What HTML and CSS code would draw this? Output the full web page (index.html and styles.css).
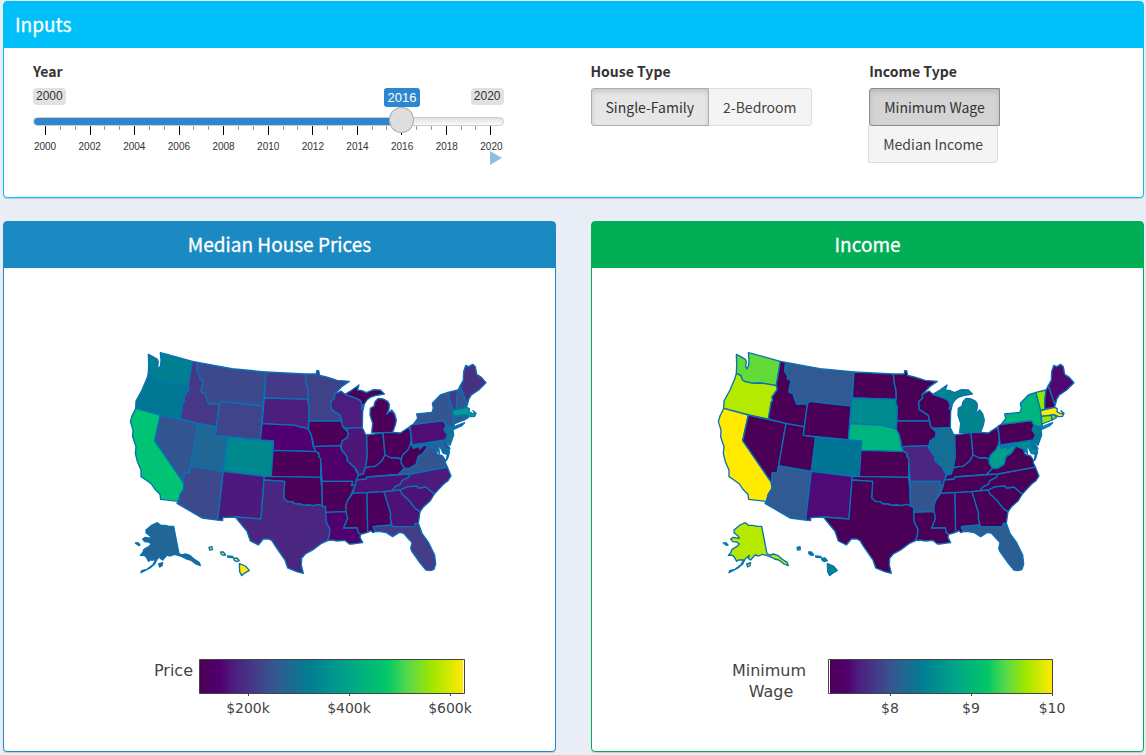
FILE: index.html
```html
<!DOCTYPE html>
<html lang="en">
<head>
<meta charset="utf-8">
<title>Housing and Income</title>
<link rel="stylesheet" href="styles.css">
</head>
<body>
<main class="page">
  <section class="box box-aqua">
    <header class="box-header"><h2 class="box-title">Inputs</h2></header>
    <div class="inputs">
      <div class="field">
        <label class="field-label" for="year">Year</label>
        <div class="slider">
          <div class="slider-tags">
            <span class="tag">2000</span>
            <span class="tag">2020</span>
            <output class="bubble" for="year">2016</output>
          </div>
          <input class="range" id="year" type="range" min="2000" max="2020" value="2016">
          <div class="ticks"><i class="major"></i><i></i><i></i><i class="major"></i><i></i><i></i><i class="major"></i><i></i><i></i><i class="major"></i><i></i><i></i><i class="major"></i><i></i><i></i><i class="major"></i><i></i><i></i><i class="major"></i><i></i><i></i><i class="major"></i><i></i><i></i><i class="major"></i><i></i><i></i><i class="major"></i><i></i><i></i><i class="major"></i></div>
          <div class="years"><span>2000</span><span>2002</span><span>2004</span><span>2006</span><span>2008</span><span>2010</span><span>2012</span><span>2014</span><span>2016</span><span>2018</span><span>2020</span></div>
          <button class="play" type="button" aria-label="Play"><svg width="12" height="14" viewBox="0 0 12 14"><path d="M0 0L12 7L0 14Z" fill="#8bc1de"/></svg></button>
        </div>
      </div>
      <div class="field" role="group" aria-labelledby="house-label">
        <span class="field-label" id="house-label">House Type</span>
        <div class="buttons">
          <button class="btn active" type="button">Single-Family</button>
          <button class="btn" type="button">2-Bedroom</button>
        </div>
      </div>
      <div class="field" role="group" aria-labelledby="income-label">
        <span class="field-label" id="income-label">Income Type</span>
        <div class="buttons">
          <button class="btn active focused" type="button">Minimum Wage</button>
          <button class="btn" type="button">Median Income</button>
        </div>
      </div>
    </div>
  </section>

  <div class="panels">
    <section class="box box-blue">
      <header class="box-header centered"><h2 class="box-title">Median House Prices</h2></header>
      <div class="plot">
        <svg class="map" viewBox="0 0 1110 750" role="img" aria-label="Median house prices by state">
          <defs>
            <path id="wa" d="M79 43L92 50L106 58L109 66L107 80L111 87L116 75L117 60L115 38L160 50L211 64L199 137L165 131L150 129L130 130L105 125L97 120L92 106L79 100L80 75Z"/>
            <path id="or" d="M79 100L92 106L97 120L105 125L130 130L150 129L165 131L199 137L202 148L186 171L188 182L184 185L175 237L115 225L41 205L42 183L60 150L75 115Z"/>
            <path id="ca" d="M41 205L115 225L98 302L184 427L186 445L175 462L169 484L116 478L114 463L98 447L89 433L72 420L57 410L57 390L46 365L40 340L42 320L32 290L33 270L25 245L30 228L38 212Z"/>
            <path id="nv" d="M115 225L228 250L206 378L201 400L187 398L184 427L98 302Z"/>
            <path id="ut" d="M228 250L283 260L280 286L317 291L304 394L206 378Z"/>
            <path id="id" d="M211 64L227 67L224 93L234 110L232 115L244 122L238 145L238 157L249 160L255 180L261 193L279 191L292 193L283 260L228 250L175 237L184 185L188 182L186 171L202 148L199 137Z"/>
            <path id="mt" d="M227 67L330 86L432 96L423 198L297 184L292 193L279 191L261 193L255 180L249 160L238 157L238 145L244 122L232 115L234 110L224 93Z"/>
            <path id="wy" d="M297 184L423 198L415 300L280 286L292 193Z"/>
            <path id="co" d="M317 291L455 303L448 409L304 395Z"/>
            <path id="az" d="M206 378L304 394L287 540L240 534L165 490L169 484L175 462L186 445L184 427L187 398L201 400Z"/>
            <path id="nm" d="M304 394L427 409L417 537L340 531L302 533L302 542L287 540Z"/>
            <path id="nd" d="M432 96L550 102L553 130L558 150L559 178L427 174Z"/>
            <path id="sd" d="M427 174L559 178L557 187L562 200L561 243L559 268L545 262L534 261L519 256L420 251Z"/>
            <path id="ne" d="M420 251L519 256L534 261L545 262L559 268L567 282L573 315L582 335L453 331L455 303L415 300Z"/>
            <path id="ks" d="M453 331L582 335L592 341L590 347L596 357L596 412L448 409Z"/>
            <path id="ok" d="M427 409L596 412L600 450L601 498L589 493L575 497L559 495L545 496L534 492L520 492L510 485L498 485L485 475L488 424L426 420Z"/>
            <path id="tx" d="M426 420L488 424L485 475L498 485L510 485L520 492L534 492L545 496L559 495L575 497L589 493L601 498L611 501L613 546L624 568L622 588L616 602L599 610L575 628L550 642L539 655L538 675L544 700L524 695L497 684L489 660L475 640L459 617L450 602L440 597L424 597L409 615L385 603L375 574L340 531L417 537Z"/>
            <path id="mn" d="M550 102L583 102L584 92L590 92L593 106L610 110L630 116L645 121L682 124L659 140L637 163L638 175L626 185L628 208L655 226L659 243L561 243L562 200L557 187L559 178L558 150L553 130Z"/>
            <path id="ia" d="M561 243L659 243L662 260L679 277L676 293L660 303L657 320L654 317L574 320L573 305L567 282L559 268Z"/>
            <path id="mo" d="M574 320L654 317L659 330L675 349L676 362L696 380L709 405L703 422L700 435L688 437L692 424L600 424L596 357L590 347L592 341L582 335Z"/>
            <path id="ar" d="M600 424L692 424L688 437L700 435L689 460L678 480L672 495L673 515L611 517L611 501L601 498Z"/>
            <path id="la" d="M611 517L673 515L677 535L665 564L706 563L709 578L716 583L714 592L722 608L704 610L690 612L682 612L668 601L645 603L630 600L616 602L622 588L624 568L613 546Z"/>
            <path id="wi" d="M637 163L657 153L669 163L704 175L716 182L720 196L717 208L727 192L722 215L721 263L672 265L662 260L659 243L655 226L628 208L626 185L638 175Z"/>
            <path id="mi" d="M669 163L690 150L711 135L706 150L720 152L733 158L755 149L775 150L787 162L760 167L745 172L735 180L727 192L720 196L716 182L704 175ZM769 175L784 177L797 184L802 193L801 208L794 223L809 210L818 222L823 240L820 255L812 277L749 278L752 250L744 225L745 205L756 198L759 185Z"/>
            <path id="il" d="M672 265L721 263L730 282L734 285L736 350L730 382L724 402L710 405L705 392L696 380L676 362L675 349L659 330L657 320L660 303L676 293L679 277Z"/>
            <path id="in" d="M734 285L783 278L789 345L780 362L765 375L757 380L745 380L730 384L736 350Z"/>
            <path id="oh" d="M783 278L812 277L835 279L862 261L868 290L866 312L858 330L842 345L838 357L825 354L808 354L789 345Z"/>
            <path id="ky" d="M730 384L745 380L757 380L765 375L780 362L789 345L808 354L825 354L838 357L838 370L848 385L830 403L735 411L733 417L703 420L710 405L724 402Z"/>
            <path id="tn" d="M703 420L733 417L735 411L863 402L860 412L840 422L835 433L820 440L810 452L786 455L692 460L700 435Z"/>
            <path id="ms" d="M692 460L735 458L737 577L716 583L709 578L706 563L665 564L677 535L672 515L672 495L678 480Z"/>
            <path id="al" d="M735 458L786 455L806 520L805 535L809 555L754 560L760 575L752 578L747 572L737 577Z"/>
            <path id="ga" d="M786 455L834 450L840 462L860 480L880 505L894 515L889 550L880 550L877 560L811 560L805 535L806 520Z"/>
            <path id="sc" d="M834 450L855 440L885 438L890 444L912 441L937 462L925 482L905 500L894 515L880 505L860 480L840 462Z"/>
            <path id="nc" d="M810 452L820 440L835 433L840 422L860 412L863 402L976 381L987 408L978 422L965 432L950 448L937 462L912 441L890 444L885 438L855 440L834 450Z"/>
            <path id="fl" d="M754 560L809 555L811 560L877 560L880 550L889 550L900 580L920 608L938 645L941 672L936 688L925 692L912 690L895 670L870 635L866 625L870 608L858 595L845 580L832 577L812 590L793 578L770 574L760 575Z"/>
            <path id="va" d="M830 403L848 385L862 385L882 373L888 350L903 340L918 318L940 327L945 342L962 348L970 360L970 368L976 381L863 402ZM976 343L983 335L978 352L973 362Z"/>
            <path id="wv" d="M838 357L842 345L858 330L866 312L870 315L874 324L892 318L893 327L906 315L918 318L903 340L888 350L882 373L862 385L848 385L838 370Z"/>
            <path id="md" d="M870 315L963 302L968 328L983 328L976 343L964 340L955 322L950 318L952 340L940 327L918 318L906 315L893 327L892 318L874 324Z"/>
            <path id="de" d="M963 302L970 300L974 312L984 325L968 328Z"/>
            <path id="nj" d="M972 255L992 262L995 285L984 316L970 305L969 300L977 285L966 270Z"/>
            <path id="pa" d="M864 258L874 253L964 242L972 255L966 270L977 285L969 300L870 315L868 290Z"/>
            <path id="ny" d="M874 253L887 235L884 222L930 217L934 205L931 190L955 165L978 157L985 185L994 212L994 240L997 253L992 262L972 255L964 242ZM993 269L997 260L1028 248L1018 258Z"/>
            <path id="vt" d="M978 157L1008 150L1004 185L1004 207L992 212L985 185Z"/>
            <path id="nh" d="M1008 150L1015 137L1034 193L1034 202L1004 207L1004 185Z"/>
            <path id="me" d="M1015 137L1024 120L1025 95L1031 76L1040 80L1052 73L1060 80L1064 103L1078 112L1092 128L1070 150L1048 165L1040 178L1036 195L1030 180Z"/>
            <path id="ma" d="M992 212L1034 202L1042 206L1041 215L1051 221L1060 222L1053 212L1062 220L1058 229L1046 230L1032 224L994 229Z"/>
            <path id="ct" d="M994 229L1024 226L1027 240L996 252Z"/>
            <path id="ri" d="M1024 226L1032 224L1040 232L1027 240Z"/>
            <path id="ak" d="M106 548L116 556L129 556L141 559L155 559L171 641L180 645L190 642L203 646L216 657L232 668L235 677L222 672L206 660L194 657L180 650L171 647L158 643L145 648L135 645L122 660L115 655L118 646L105 658L98 672L84 684L57 698L59 692L75 688L92 675L101 660L85 660L80 664L72 650L65 645L55 646L62 638L66 628L80 620L88 612L80 606L68 605L62 597L70 592L88 595L84 588L72 578L72 570L90 555ZM40 609L48 608L54 615L50 616ZM110 672L122 668L120 677L113 681Z"/>
            <path id="hi" d="M261 622L270 620L271 629L263 630ZM296 636L304 636L311 645L304 646L297 642ZM317 648L332 649L334 653L318 652ZM335 655L345 654L352 662L343 665L336 660ZM352 671L370 678L382 691L367 700L359 707L353 695Z"/>
          </defs>
          <g class="states">
            <use href="#wa" fill="#007f90"/><use href="#or" fill="#007792"/><use href="#ca" fill="#00c374"/><use href="#nv" fill="#32558f"/><use href="#ut" fill="#206795"/><use href="#id" fill="#463787"/><use href="#mt" fill="#3c4a8b"/><use href="#wy" fill="#40448a"/><use href="#co" fill="#00888f"/><use href="#az" fill="#3c4a8b"/><use href="#nm" fill="#4b1a7c"/><use href="#nd" fill="#443a88"/><use href="#sd" fill="#4c1f7f"/><use href="#ne" fill="#510071"/><use href="#ks" fill="#4c005a"/><use href="#ok" fill="#4c0057"/><use href="#tx" fill="#4b2680"/><use href="#mn" fill="#404289"/><use href="#ia" fill="#4c005a"/><use href="#mo" fill="#50006a"/><use href="#ar" fill="#4c005a"/><use href="#la" fill="#50006f"/><use href="#wi" fill="#4c1d7f"/><use href="#mi" fill="#4c005a"/><use href="#il" fill="#4d1679"/><use href="#in" fill="#4c005a"/><use href="#oh" fill="#4c005c"/><use href="#ky" fill="#4c005c"/><use href="#tn" fill="#4f1077"/><use href="#ms" fill="#4c0057"/><use href="#al" fill="#4c005e"/><use href="#ga" fill="#4d1278"/><use href="#sc" fill="#4d1278"/><use href="#nc" fill="#4c1b7e"/><use href="#fl" fill="#433c89"/><use href="#va" fill="#345590"/><use href="#wv" fill="#4c0055"/><use href="#md" fill="#206595"/><use href="#de" fill="#3c4a8b"/><use href="#nj" fill="#177095"/><use href="#pa" fill="#4e0e76"/><use href="#ny" fill="#335690"/><use href="#vt" fill="#443a88"/><use href="#nh" fill="#345590"/><use href="#me" fill="#483082"/><use href="#ma" fill="#00a08a"/><use href="#ct" fill="#2a5e92"/><use href="#ri" fill="#2a5e92"/><use href="#ak" fill="#236594"/><use href="#hi" fill="#ffea00"/>
          </g>
        </svg>
        <svg class="legend" viewBox="0 0 370 80">
          <defs>
            <linearGradient id="scale">
              <stop offset="0" stop-color="#4b0055"/><stop offset=".08" stop-color="#510070"/><stop offset=".13" stop-color="#4c1f80"/><stop offset=".21" stop-color="#433c88"/><stop offset=".29" stop-color="#325a91"/><stop offset=".42" stop-color="#007f92"/><stop offset=".56" stop-color="#00a389"/><stop offset=".71" stop-color="#00c768"/><stop offset=".79" stop-color="#55d94a"/><stop offset=".88" stop-color="#9fe600"/><stop offset="1" stop-color="#ffea00"/>
            </linearGradient>
          </defs>
          <text class="legend-title" x="71" y="26" text-anchor="end">Price</text>
          <rect x="78" y="10" width="263" height="34" fill="url(#scale)"/>
          <path class="legend-frame" d="M77.5 9.5H342.5V43.5H77.5ZM126.5 44V46M227.5 44V46M328.5 44V46"/>
          <text class="legend-tick" x="126" y="63">$200k</text>
          <text class="legend-tick" x="227" y="63">$400k</text>
          <text class="legend-tick" x="328" y="63">$600k</text>
        </svg>
      </div>
    </section>

    <section class="box box-green">
      <header class="box-header centered"><h2 class="box-title">Income</h2></header>
      <div class="plot">
        <svg class="map" viewBox="0 0 1110 750" role="img" aria-label="Minimum wage by state">
          <g class="states" fill="#4b0057">
            <use href="#wa" fill="#62da38"/><use href="#or" fill="#b5e900"/><use href="#ca" fill="#ffea00"/><use href="#nv"/><use href="#ut"/><use href="#id"/><use href="#mt" fill="#325a92"/><use href="#wy"/><use href="#co" fill="#007493"/><use href="#az" fill="#325a92"/><use href="#nm" fill="#500a75"/><use href="#nd"/><use href="#sd" fill="#008b8f"/><use href="#ne" fill="#00b47e"/><use href="#ks"/><use href="#ok"/><use href="#tx"/><use href="#mn"/><use href="#ia"/><use href="#mo" fill="#4b2680"/><use href="#ar" fill="#355590"/><use href="#la"/><use href="#wi"/><use href="#mi" fill="#00858f"/><use href="#il" fill="#146f94"/><use href="#in"/><use href="#oh"/><use href="#ky"/><use href="#tn"/><use href="#ms"/><use href="#al"/><use href="#ga"/><use href="#sc"/><use href="#nc"/><use href="#fl" fill="#2c5e93"/><use href="#va"/><use href="#wv" fill="#00a08a"/><use href="#md" fill="#008f8e"/><use href="#de" fill="#146f94"/><use href="#nj" fill="#007b92"/><use href="#pa"/><use href="#ny" fill="#00b47e"/><use href="#vt" fill="#98e400"/><use href="#nh"/><use href="#me" fill="#4f0872"/><use href="#ma" fill="#ffea00"/><use href="#ct" fill="#98e400"/><use href="#ri" fill="#98e400"/><use href="#ak" fill="#b5e900"/><use href="#hi" fill="#00858f"/>
          </g>
        </svg>
        <svg class="legend" viewBox="0 0 370 80">
          <text class="legend-title" x="59" y="26" text-anchor="middle">Minimum</text>
          <text class="legend-title" x="61" y="47" text-anchor="middle">Wage</text>
          <rect x="120" y="10" width="222" height="34" fill="url(#scale)"/>
          <path class="legend-frame" d="M118.500 9.500H342.500V43.500H118.500ZM180.500 44V46M261.500 44V46M342.500 44V46"/>
          <text class="legend-tick" x="180" y="63">$8</text>
          <text class="legend-tick" x="261" y="63">$9</text>
          <text class="legend-tick" x="342" y="63">$10</text>
        </svg>
      </div>
    </section>
  </div>
</main>
</body>
</html>
```
FILE: styles.css
```css
* { box-sizing: border-box; }

body {
  margin: 0;
  background: #e9eef6;
  color: #333;
  font-family: "Noto Sans CJK SC", "Open Sans", sans-serif;
  font-size: 14px;
}

.page {
  display: flex;
  flex-direction: column;
  gap: 23px;
  padding: 1px 2px 3px 3px;
}

.box {
  background: #fff;
  border: 1px solid;
  border-radius: 4px;
  box-shadow: 0 1px 1px rgba(0, 0, 0, .15);
}
.box-aqua { border-color: #00c0f9; }
.box-blue { border-color: #1c8ac2; }
.box-green { border-color: #00ae55; }
.box-header { padding: 10px 11px 12px; line-height: 24px; color: #fff; }
.box-aqua .box-header { background: #00c0f9; }
.box-blue .box-header { background: #1c8ac2; }
.box-green .box-header { background: #00ae55; }
.box-title { margin: 0; font-size: 19px; font-weight: 400; -webkit-text-stroke: 0.3px #fff; }
.centered { text-align: center; }

.inputs {
  display: grid;
  grid-template-columns: 2fr 1fr 1fr;
  min-height: 149px;
  padding: 13px 10px 0 14px;
}
.field { padding: 0 15px; }
.field-label {
  display: block;
  margin-bottom: 6px;
  font-size: 14px;
  font-weight: 700;
  line-height: 21px;
}

.slider {
  position: relative;
  margin-right: 57px;
  font-family: "Liberation Sans", Arial, sans-serif;
}
.slider-tags {
  display: flex;
  justify-content: space-between;
  height: 18px;
}
.tag {
  height: 17px;
  padding: 0 3px;
  border-radius: 4px;
  background: #e1e1e1;
  font-size: 12px;
  line-height: 17px;
}
.bubble {
  position: absolute;
  top: 0;
  left: 78%;
  width: 36px;
  margin-left: -16px;
  border-radius: 3px;
  background: #2d87d0;
  color: #fff;
  font-size: 13px;
  line-height: 19px;
  text-align: center;
}
.range {
  display: block;
  width: 100%;
  height: 30px;
  margin: 0 0 -10px;
  appearance: none;
  background: transparent;
  position: relative;
}
.range::-webkit-slider-runnable-track {
  height: 9px;
  border: 1px solid #ccc;
  border-radius: 8px;
  background: linear-gradient(to right, #2d87d0 78%, transparent 78%), linear-gradient(#ddd, #fff);
  background-origin: border-box;
}
.range::-webkit-slider-thumb {
  appearance: none;
  width: 25px;
  height: 26px;
  margin-top: -11px;
  border: 1px solid #aaa;
  border-radius: 50%;
  background: #dedede;
}
.ticks {
  display: flex;
  justify-content: space-between;
  margin: 0 12px;
  height: 9px;
}
.ticks i { width: 1px; height: 4px; background: #999; }
.ticks .major { height: 9px; background: #000; }
.years {
  display: flex;
  justify-content: space-between;
  margin: 6px -1px 0;
  font-size: 10px;
  line-height: 12px;
}
.years span { width: 26px; text-align: center; }
.play {
  display: block;
  margin: -2px 2px 0 auto;
  padding: 0;
  border: 0;
  background: none;
  line-height: 0;
}

.buttons { display: flex; flex-wrap: wrap; }
.btn {
  height: 38px;
  margin: 0 0 -1px -1px;
  padding: 0 14px;
  border: 1px solid #ddd;
  border-radius: 0 3px 3px 0;
  background: #f4f4f4;
  color: #444;
  font: inherit;
}
.btn:first-child { margin-left: 0; border-radius: 3px 0 0 3px; }
.btn.active {
  position: relative;
  border-color: #adadad;
  background: #e6e6e6;
  color: #333;
  box-shadow: inset 0 3px 5px rgba(0, 0, 0, .125);
}
.btn.focused { border-color: #8c8c8c; background: #d4d4d4; }

.panels {
  display: grid;
  grid-template-columns: 1fr 1fr;
  gap: 35px;
}
.plot {
  display: flex;
  flex-direction: column;
  align-items: center;
  gap: 60px;
  padding: 72px 0 21px 55px;
}
.map { width: 370px; height: 250px; }
.legend { width: 370px; height: 80px; }
.states { stroke: #0872b4; stroke-width: 4; stroke-linejoin: round; }
.legend-title, .legend-tick { font-family: Verdana, "DejaVu Sans", sans-serif; fill: #444; }
.legend-title { font-size: 16px; }
.legend-tick { font-size: 14px; text-anchor: middle; }
.legend-frame { fill: none; stroke: #444; }
```
